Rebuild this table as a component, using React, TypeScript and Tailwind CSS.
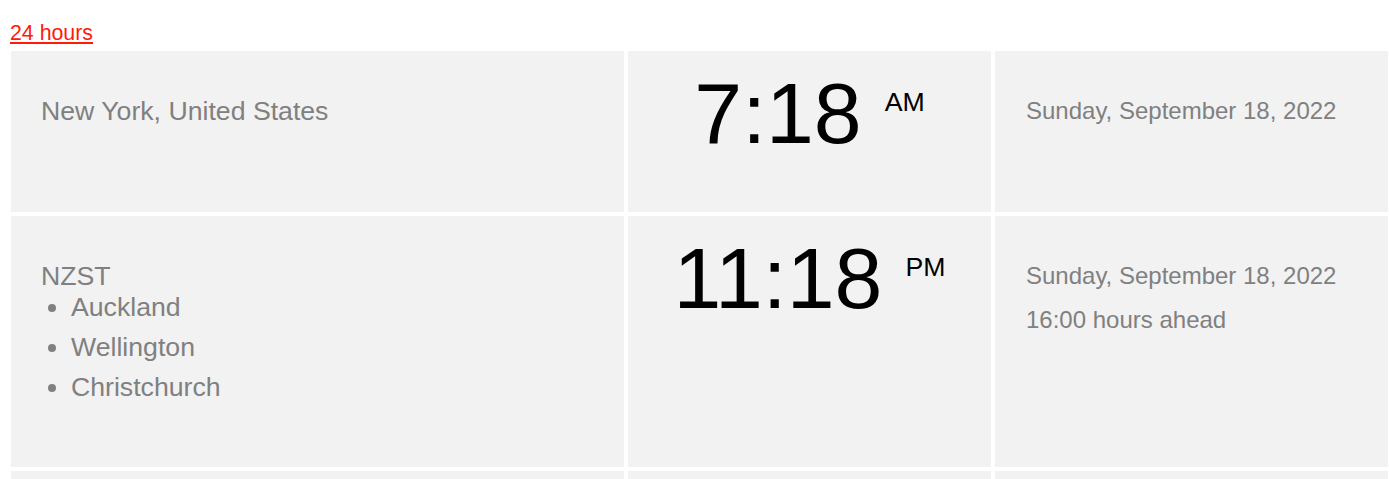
import React from "react";

interface Zone {
  label: string;
  cities?: string[];
  time: string;
  period: string;
  date: string;
  offset?: string;
  height: string;
}

const zones: Zone[] = [
  {
    label: "New York, United States",
    time: "7:18",
    period: "AM",
    date: "Sunday, September 18, 2022",
    height: "h-[161px]",
  },
  {
    label: "NZST",
    cities: ["Auckland", "Wellington", "Christchurch"],
    time: "11:18",
    period: "PM",
    date: "Sunday, September 18, 2022",
    offset: "16:00 hours ahead",
    height: "h-[251px]",
  },
];

function ZoneRow({ zone }: { zone: Zone }) {
  return (
    <>
      {/* place column */}
      <div className={`${zone.height} bg-[#f2f2f2] pl-[30px] pt-[45px] text-[26.67px] text-[#808080]`}>
        <div className="leading-[31px]">{zone.label}</div>
        {zone.cities && (
          <ul className="list-disc pl-[30px] space-y-[9px]">
            {zone.cities.map((c) => (
              <li key={c} className="leading-[31px]">
                {c}
              </li>
            ))}
          </ul>
        )}
      </div>

      {/* clock column */}
      <div className={`${zone.height} bg-[#f2f2f2] flex justify-center items-start pt-[19px] text-black`}>
        <span className="text-[86px] leading-none">{zone.time}</span>
        <span className="text-[26.67px] leading-none mt-[19px] ml-[23px]">{zone.period}</span>
      </div>

      {/* date column */}
      <div className={`${zone.height} bg-[#f2f2f2] pl-[31px] pt-[38px] text-[24px] leading-[44px] text-[#808080]`}>
        <div>{zone.date}</div>
        {zone.offset && <div>{zone.offset}</div>}
      </div>
    </>
  );
}

export default function App() {
  return (
    <div
      className="min-h-screen bg-white overflow-hidden"
      style={{ fontFamily: "'Liberation Sans', Arial, sans-serif" }}
    >
      <div className="pl-[10px] pt-[21px] leading-[24px]">
        <a href="#" className="text-[21.33px] text-[#ff1a0a] underline">
          24 hours
        </a>
      </div>

      <div className="mt-[4px] ml-[11px] grid grid-cols-[613px_363px_393px] gap-[4px]">
        {zones.map((z) => (
          <ZoneRow key={z.label} zone={z} />
        ))}
        <div className="h-[100px] bg-[#f2f2f2]" />
        <div className="h-[100px] bg-[#f2f2f2]" />
        <div className="h-[100px] bg-[#f2f2f2]" />
      </div>
    </div>
  );
}
